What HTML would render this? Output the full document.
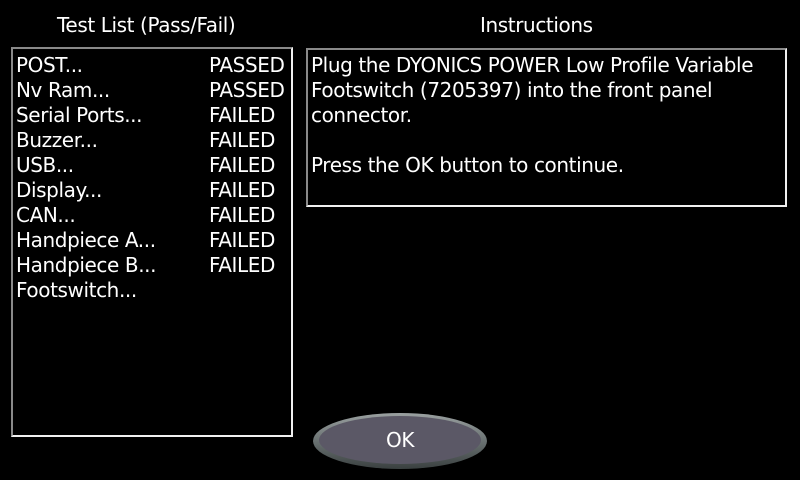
<!DOCTYPE html>
<html><head><style>
html,body{margin:0;padding:0;background:#000;width:800px;height:480px;overflow:hidden}
body{font-family:"DejaVu Sans","Liberation Sans",sans-serif;color:#fff;font-size:20px;letter-spacing:-0.4px;position:relative}
.t{position:absolute;white-space:nowrap}
.box{position:absolute;border:2px solid;border-color:#8a8a8a #f0f0f0 #f0f0f0 #8a8a8a;box-sizing:border-box}
.row{position:absolute;left:16px;white-space:nowrap;line-height:25px;height:25px}
.st{position:absolute;left:209px;white-space:nowrap;line-height:25px}
.btn{position:absolute;left:313px;top:413px;width:174px;height:56px;border-radius:50%;background:linear-gradient(#9aa0a0,#6a7272 50%,#3a4040)}
.btn .in{position:absolute;left:6px;top:3px;right:6px;bottom:5px;border-radius:50%;background:#5b5866}
</style></head><body>
<div class="t" style="left:57px;top:13px;line-height:25px">Test List (Pass/Fail)</div>
<div class="t" style="left:480px;top:13px;line-height:25px">Instructions</div>
<div class="box" style="left:11px;top:47px;width:282px;height:390px"></div>
<div class="box" style="left:306px;top:48px;width:481px;height:159px"></div>
<div class="row" style="top:53px">POST...</div><div class="st" style="top:53px">PASSED</div>
<div class="row" style="top:78px">Nv Ram...</div><div class="st" style="top:78px">PASSED</div>
<div class="row" style="top:103px">Serial Ports...</div><div class="st" style="top:103px">FAILED</div>
<div class="row" style="top:128px">Buzzer...</div><div class="st" style="top:128px">FAILED</div>
<div class="row" style="top:153px">USB...</div><div class="st" style="top:153px">FAILED</div>
<div class="row" style="top:178px">Display...</div><div class="st" style="top:178px">FAILED</div>
<div class="row" style="top:203px">CAN...</div><div class="st" style="top:203px">FAILED</div>
<div class="row" style="top:228px">Handpiece A...</div><div class="st" style="top:228px">FAILED</div>
<div class="row" style="top:253px">Handpiece B...</div><div class="st" style="top:253px">FAILED</div>
<div class="row" style="top:278px">Footswitch...</div>
<div class="t" style="left:311px;top:53px;line-height:25px">Plug the DYONICS POWER Low Profile Variable<br>Footswitch (7205397) into the front panel<br>connector.<br><br>Press the OK button to continue.</div>
<div class="btn"><div class="in"></div></div>
<div class="t" style="left:386px;top:428px;line-height:25px">OK</div>
</body></html>
